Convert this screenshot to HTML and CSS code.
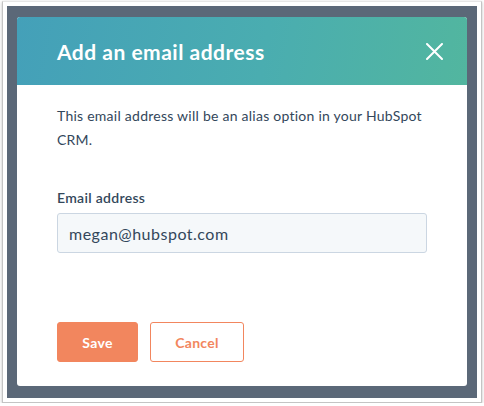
FILE: index.html
```html
<!DOCTYPE html>
<html lang="en">
<head>
  <meta charset="UTF-8" />
  <title>Add an email address</title>
  <link rel="stylesheet" href="styles.css">
</head>
<body>
  <div class="frame">
    <div class="backdrop">
      <div class="modal">
        <div class="modal-header">
          <h1>Add an email address</h1>
          <button class="close-btn" aria-label="Close">
            <svg width="17" height="17" viewBox="0 0 17 17">
              <path d="M1 1 L16 16 M16 1 L1 16" stroke="#fff" stroke-width="2" stroke-linecap="round" />
            </svg>
          </button>
        </div>
        <div class="modal-body">
          <p class="intro">This email address will be an alias option in your HubSpot CRM.</p>
          <label for="email">Email address</label>
          <input type="text" id="email" value="megan@hubspot.com">
        </div>
        <div class="modal-footer">
          <button class="btn btn-primary">Save</button>
          <button class="btn btn-secondary">Cancel</button>
        </div>
      </div>
    </div>
  </div>
</body>
</html>
```

FILE: styles.css
```css
body {
  margin: 0;
  background-color: #fff;
  font-family: "Lato", "Liberation Sans", sans-serif;
  color: #33475b;
}

.frame {
  margin: 1px 2px 0 2px;
  width: 470px;
  height: 392px;
  padding: 4px;
  border: 1px solid #c4c4c4;
  border-top-color: #e6e6e6;
  box-shadow: 0 1px 3px rgba(0, 0, 0, 0.25);
  background-color: #fff;
}

.backdrop {
  background-color: #5b6878;
  padding: 11px 10px 12px 10px;
  height: 369px;
}

.modal {
  background-color: #fff;
  border-radius: 3px;
  overflow: hidden;
  height: 369px;
  display: flex;
  flex-direction: column;
}

.modal-header {
  height: 68px;
  padding: 0 24px 0 40px;
  display: flex;
  align-items: center;
  justify-content: space-between;
  background: linear-gradient(100deg, #44a0b9 0%, #4aadb0 55%, #52b69f 100%);
}

.modal-header h1 {
  margin: 0;
  font-size: 21px;
  font-weight: 700;
  color: #fff;
  letter-spacing: 0.5px;
}

.close-btn {
  background: none;
  border: none;
  padding: 0;
  width: 17px;
  height: 17px;
  cursor: pointer;
  display: flex;
}

.modal-body {
  padding: 19px 40px 0 40px;
}

.intro {
  margin: 0;
  font-size: 14px;
  line-height: 24px;
  letter-spacing: 0.25px;
  color: #33475b;
}

label {
  display: block;
  margin-top: 37px;
  font-size: 14px;
  font-weight: 600;
  letter-spacing: 0.3px;
  color: #33475b;
}

input {
  display: block;
  box-sizing: border-box;
  width: 370px;
  height: 40px;
  margin-top: 7px;
  padding: 0 11px;
  font-family: inherit;
  font-size: 16px;
  letter-spacing: 0.5px;
  color: #33475b;
  background-color: #f5f8fa;
  border: 1px solid #cbd6e2;
  border-radius: 3px;
}

.modal-footer {
  margin-top: auto;
  padding: 0 40px 24px 40px;
  display: flex;
  gap: 12px;
}

.btn {
  height: 40px;
  font-family: inherit;
  font-size: 14px;
  font-weight: 700;
  letter-spacing: 0.3px;
  border-radius: 3px;
  cursor: pointer;
}

.btn-primary {
  width: 81px;
  background-color: #f2865e;
  border: 1px solid #f2865e;
  color: #fff;
}

.btn-secondary {
  width: 94px;
  background-color: #fff;
  border: 1px solid #f2865e;
  color: #f2865e;
}
```
